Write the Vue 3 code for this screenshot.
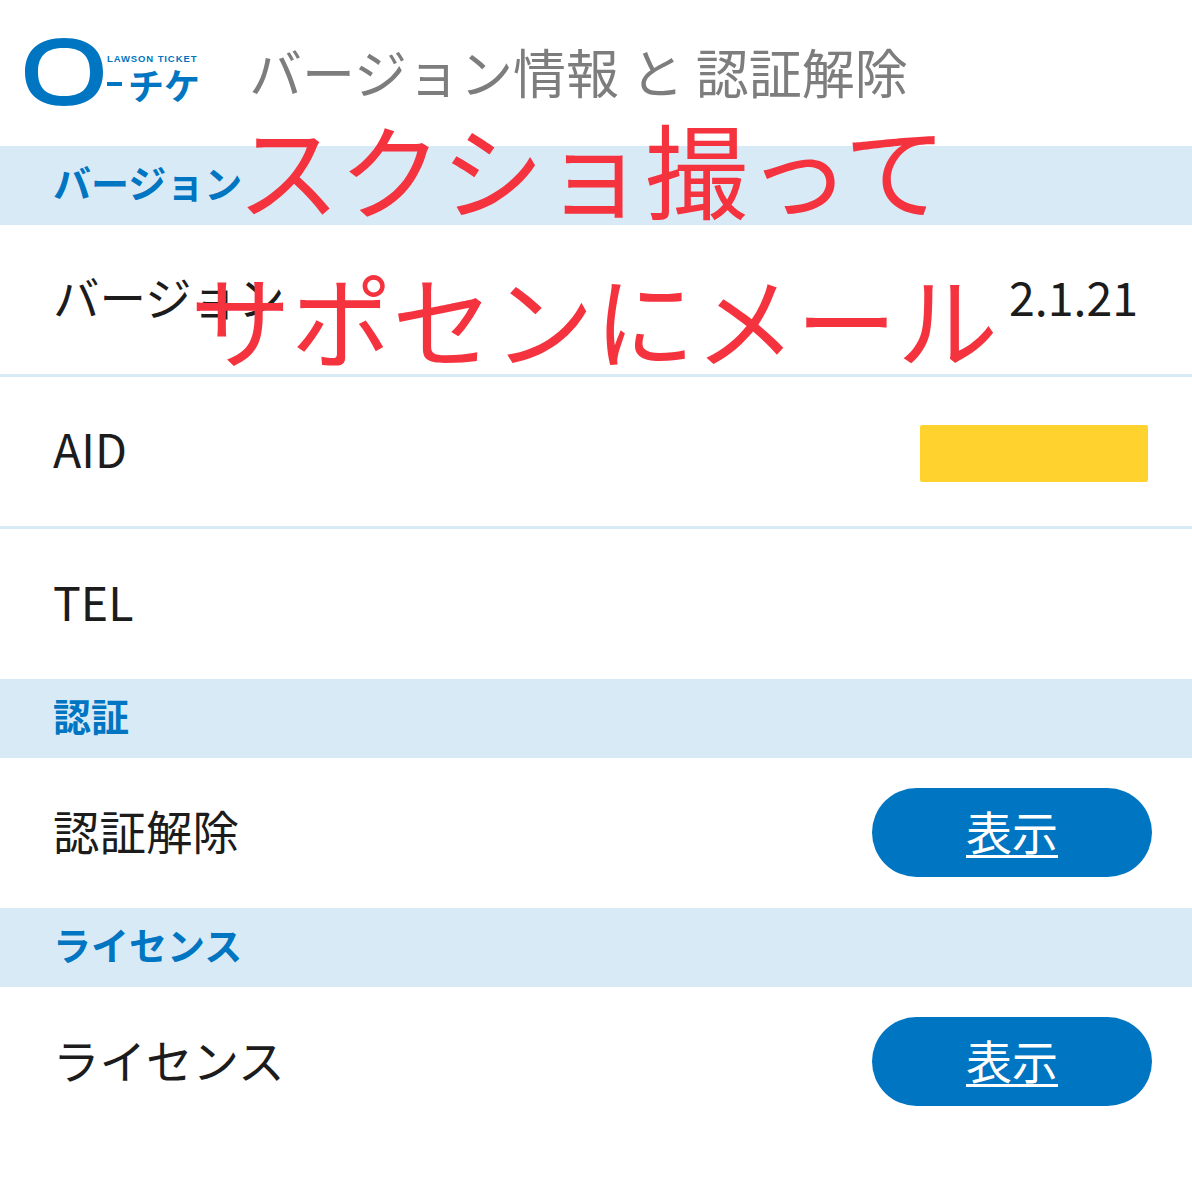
<script setup>
const sections = [
  { title: 'バージョン', rows: [
    { label: 'バージョン', value: '2.1.21' },
    { label: 'AID', mask: true },
    { label: 'TEL' },
  ] },
  { title: '認証', rows: [{ label: '認証解除', button: '表示' }] },
  { title: 'ライセンス', rows: [{ label: 'ライセンス', button: '表示' }] },
]
</script>

<template>
  <div class="page">
    <header class="header">
      <div class="logo">
        <svg class="logo-o" viewBox="0 0 78 68" width="78" height="68" aria-hidden="true">
          <path fill="#0075c1" fill-rule="evenodd" d="M39 0C64 0 78 12 78 34C78 56 64 68 39 68C14 68 0 56 0 34C0 12 14 0 39 0ZM39 10C22 10 13 17 13 34C13 51 22 58 39 58C56 58 65 51 65 34C65 17 56 10 39 10Z" />
        </svg>
        <div class="logo-text">
          <span class="logo-small">LAWSON TICKET</span>
          <span class="logo-line"><i class="logo-dash"></i><span class="logo-big">チケ</span></span>
        </div>
      </div>
      <h1 class="title">バージョン情報 と 認証解除</h1>
    </header>

    <section v-for="s in sections" :key="s.title">
      <h2 class="section-title">{{ s.title }}</h2>
      <div v-for="r in s.rows" :key="r.label" class="row">
        <span class="label">{{ r.label }}</span>
        <span v-if="r.value" class="value">{{ r.value }}</span>
        <span v-if="r.mask" class="mask"></span>
        <a v-if="r.button" class="btn">{{ r.button }}</a>
      </div>
    </section>

    <div class="note note-1">スクショ撮って</div>
    <div class="note note-2">サポセンにメール</div>
  </div>
</template>

<style>
html, body { margin: 0; background: #fff; }
</style>

<style scoped>
.page {
  position: relative;
  width: 1192px;
  height: 1200px;
  overflow: hidden;
  background: #fff;
  font-family: "Noto Sans CJK JP", "Noto Sans", sans-serif;
  color: #1c1c1c;
}
.header {
  height: 146px;
  display: flex;
  align-items: flex-start;
  padding: 38px 0 0 25px;
  box-sizing: border-box;
}
.logo {
  display: flex;
  width: 224px;
  height: 68px;
  flex: none;
}
.logo-o { flex: none; }
.logo-text {
  display: flex;
  flex-direction: column;
  color: #0075c1;
  padding: 16px 0 0 4px;
}
.logo-small {
  font-family: "Liberation Sans", sans-serif;
  font-size: 9.5px;
  font-weight: 700;
  line-height: 10px;
  white-space: nowrap;
  letter-spacing: 0.9px;
}
.logo-line {
  display: flex;
  align-items: center;
  height: 34px;
  margin-top: 3px;
  white-space: nowrap;
}
.logo-dash {
  display: block;
  width: 15px;
  height: 4px;
  background: #0075c1;
}
.logo-big {
  margin-left: 6px;
  font-size: 36px;
  font-weight: 700;
  line-height: 34px;
}
.title {
  margin: 3px 0 0;
  font-size: 53px;
  font-weight: 400;
  line-height: 60px;
  color: #7d7d7d;
  white-space: nowrap;
}
.section-title {
  margin: 0;
  height: 79px;
  padding-left: 53px;
  background: #d9eaf7;
  color: #0075c1;
  font-size: 38px;
  font-weight: 700;
  line-height: 72px;
}
.row {
  height: 152px;
  box-sizing: border-box;
  display: flex;
  align-items: center;
  justify-content: space-between;
  padding: 0 40px 0 53px;
  border-bottom: 3px solid #d9eaf7;
  font-size: 46.5px;
}
.row:last-child { border-bottom: 0; height: 150px; }
.value { margin-right: 14px; }
.label, .value { position: relative; top: -4px; }
.mask {
  width: 228px;
  height: 57px;
  margin: 3px 4px 0 0;
  background: #ffd22e;
  border-radius: 2px;
}
.btn {
  width: 280px;
  height: 89px;
  margin-top: -1px;
  border-radius: 45px;
  background: #0075c1;
  color: #fff;
  font-size: 46px;
  line-height: 85px;
  text-align: center;
  text-decoration: underline;
  text-underline-offset: 5px;
  text-decoration-thickness: 3px;
}
.note {
  position: absolute;
  color: #f5333f;
  font-weight: 400;
  white-space: nowrap;
  line-height: 1;
}
.note-1 {
  left: 237px;
  top: 116px;
  font-size: 103px;
  letter-spacing: -1px;
}
.note-2 {
  left: 190px;
  top: 267px;
  font-size: 101px;
}
</style>
